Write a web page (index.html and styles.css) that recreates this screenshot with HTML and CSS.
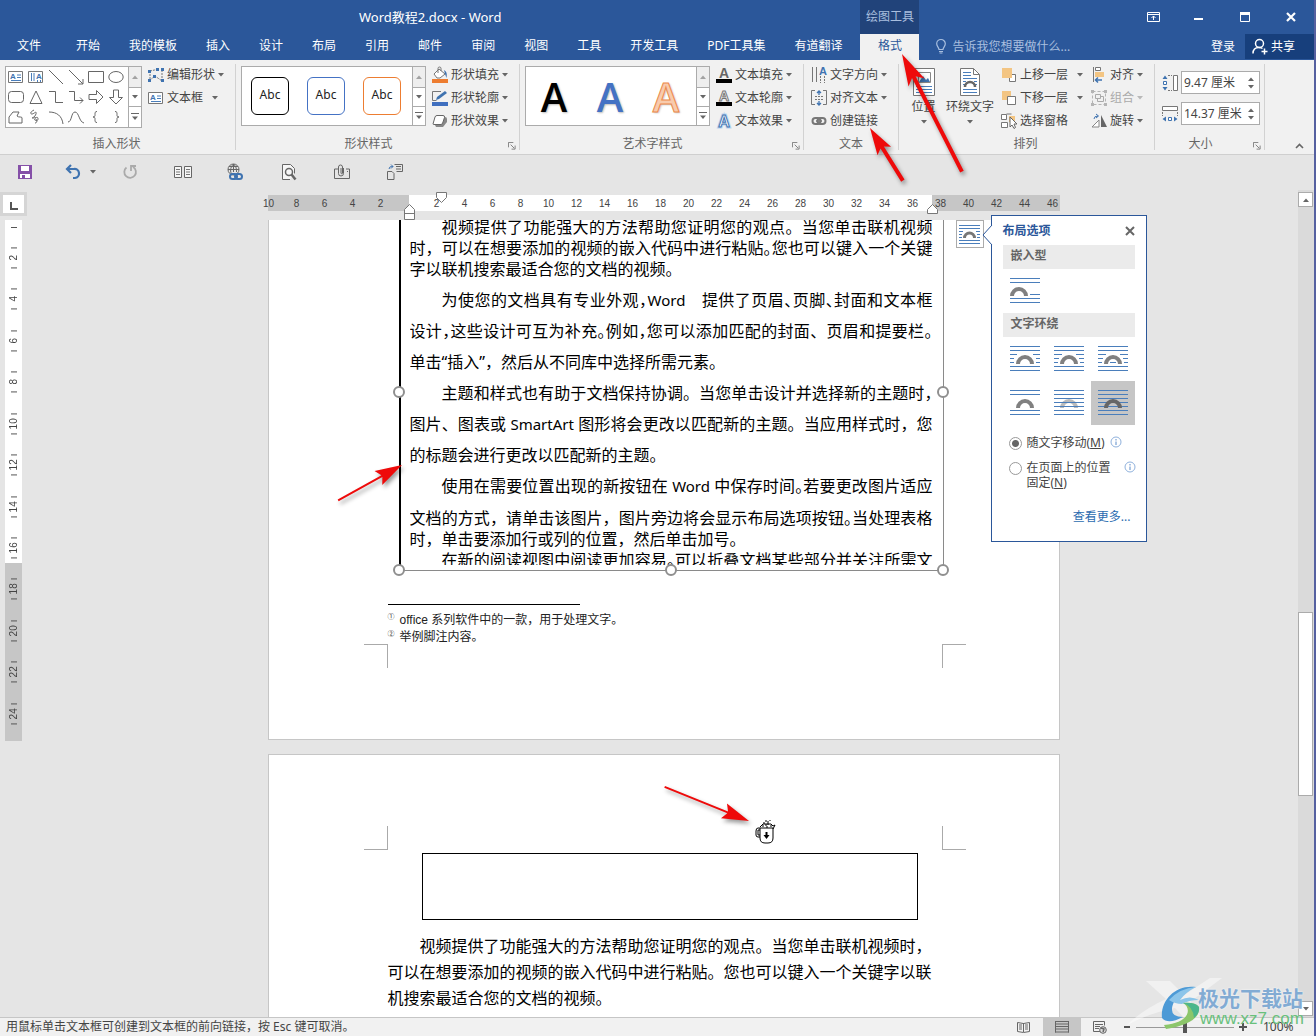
FILE: index.html
```html
<!DOCTYPE html>
<html lang="zh-CN">
<head>
<meta charset="utf-8">
<title>Word教程2.docx - Word</title>
<link rel="stylesheet" href="styles.css">
</head>
<body>
<svg class="defs" aria-hidden="true">
  <symbol id="caret" viewBox="0 0 6 4"><path d="M0 0h6L3 3.5z" fill="#666"/></symbol>
  <symbol id="launcher" viewBox="0 0 9 9"><path d="M.5 6V.5H6M3 3l4 4M8 4v4H4" fill="none" stroke="#777"/></symbol>
  <symbol id="more" viewBox="0 0 8 8"><path d="M0 .5h8" stroke="#666"/><path d="M1 3.500h6L4 7z" fill="#666"/></symbol>
  <symbol id="arch" viewBox="0 0 18 11"><path d="M0 11a9 9 0 0 1 18 0h-4a5 5 0 0 0-10 0z"/></symbol>
</svg>

<header class="top">
  <div class="top-main">
    <div class="doc-title">Word教程2.docx - Word</div>
    <nav class="tabs">
      <button class="tab file">文件</button><button class="tab">开始</button><button class="tab">我的模板</button><button class="tab">插入</button><button class="tab">设计</button><button class="tab">布局</button><button class="tab">引用</button><button class="tab">邮件</button><button class="tab">审阅</button><button class="tab">视图</button><button class="tab">工具</button><button class="tab">开发工具</button><button class="tab">PDF工具集</button><button class="tab">有道翻译</button>
    </nav>
  </div>
  <div class="context">
    <div class="context-name">绘图工具</div>
    <button class="tab active">格式</button>
  </div>
  <div class="top-side">
    <div class="win-buttons">
      <button aria-label="功能区显示选项"><svg width="13" height="10"><path d="M.5.5h12v9H.5zM.5 2.500h12M6.500 8V4M4.500 6l2-2 2 2" fill="none" stroke="#fff"/></svg></button>
      <button aria-label="最小化"><svg width="10" height="10"><path d="M0 7h9" stroke="#fff" stroke-width="2"/></svg></button>
      <button aria-label="最大化"><svg width="10" height="10"><path d="M.5.5h9v9h-9z" fill="none" stroke="#fff"/><path d="M0 1.500h10" stroke="#fff" stroke-width="3"/></svg></button>
      <button aria-label="关闭"><svg width="10" height="10"><path d="M1 1l8 8M9 1L1 9" stroke="#fff" stroke-width="2.200"/></svg></button>
    </div>
    <div class="account">
      <svg width="10" height="15"><path d="M3 10.500C3 8.500.7 7.500.7 4.800a4.300 4.300 0 0 1 8.600 0C9.300 7.500 7 8.500 7 10.500zM3 12.500h4M3.500 14h3" fill="none" stroke="#a9bfdf" stroke-width="1.200"/></svg>
      <span class="tell">告诉我您想要做什么...</span>
      <button class="login">登录</button>
      <button class="share"><svg width="16" height="17"><circle cx="7.500" cy="5.500" r="4" fill="none" stroke="#fff" stroke-width="1.500"/><path d="M1 15.500c0-4 2.500-6 6-6 1.500 0 2.500.3 3.500 1M12.500 10.500v6M9.500 13.500h6" fill="none" stroke="#fff" stroke-width="1.500"/></svg>共享</button>
    </div>
  </div>
</header>

<section class="ribbon">
  <div class="group g-insert">
    <div class="body">
      <div class="gallery shapes">
        <div class="cells">
          <button><svg class="i16" viewBox="0 0 16 16"><path d="M.5 2.500h14v11H.5z" fill="#fff" stroke="#777"/><text x="2" y="10" class="a8">A</text><path d="M9 6h4M9 8.500h4M3 11.500h10" stroke="#4a7ebb"/></svg></button>
          <button><svg class="i16" viewBox="0 0 16 16"><path d="M.5 2.500h14v11H.5z" fill="#fff" stroke="#777"/><text x="8" y="10" class="a8">A</text><path d="M3.500 4v8M6 4v8M9.500 11v2M12.500 11v2" stroke="#4a7ebb"/></svg></button>
          <button><svg class="i16 ln" viewBox="0 0 16 16"><path d="M1 1l14 14"/></svg></button>
          <button><svg class="i16 ln" viewBox="0 0 16 16"><path d="M1 1l14 14M15 10v5h-5"/></svg></button>
          <button><svg class="i16 ln" viewBox="0 0 16 16"><path d="M.5 2.500h15v11H.5z"/></svg></button>
          <button><svg class="i16 ln" viewBox="0 0 16 16"><ellipse cx="8" cy="8" rx="7.200" ry="5.500"/></svg></button>
          <button><svg class="i16 ln" viewBox="0 0 16 16"><rect x=".5" y="2.500" width="15" height="11" rx="3"/></svg></button>
          <button><svg class="i16 ln" viewBox="0 0 16 16"><path d="M8 2l6 12.500H2z"/></svg></button>
          <button><svg class="i16 ln" viewBox="0 0 16 16"><path d="M1 2.500h6.500v11H15"/></svg></button>
          <button><svg class="i16 ln" viewBox="0 0 16 16"><path d="M1 2.500h5.500v9H15M12 8.500l3 3-3 3"/></svg></button>
          <button><svg class="i16 ln" viewBox="0 0 16 16"><path d="M1 5.500h7.500v-4l6.500 6.500-6.500 6.500v-4H1z"/></svg></button>
          <button><svg class="i16 ln" viewBox="0 0 16 16"><path d="M5.500 1v7.500h-4L8 15l6.500-6.500h-4V1z"/></svg></button>
          <button><svg class="i16 ln" viewBox="0 0 16 16"><path d="M1 14V8l4-5h6l-2 4c2 2 5 0 5 2v5z"/></svg></button>
          <button><svg class="i16 ln" viewBox="0 0 16 16"><path d="M6 1C2 3 2 5 4 5s5-4 4 0-6 4-3 4 5-2 5 1-5 1-3 0 3 4 0 4"/></svg></button>
          <button><svg class="i16 ln" viewBox="0 0 16 16"><path d="M1 3c8 0 13 4 14 12"/></svg></button>
          <button><svg class="i16 ln" viewBox="0 0 16 16"><path d="M0 13C4 13 3 3 7 3s4 10 9 11"/></svg></button>
          <button><svg class="i16 ln" viewBox="0 0 16 16"><path d="M9 2.500c-2 0-2 1-2 3s0 2-2 2.500c2 .5 2 .5 2 2.500s0 3 2 3"/></svg></button>
          <button><svg class="i16 ln" viewBox="0 0 16 16"><path d="M7 2.500c2 0 2 1 2 3s0 2 2 2.500c-2 .5-2 .5-2 2.500s0 3-2 3"/></svg></button>
        </div>
        <div class="scroller"><button class="off" aria-label="上"><svg class="caret up"><use href="#caret"/></svg></button><button aria-label="下"><svg class="caret"><use href="#caret"/></svg></button><button aria-label="更多"><svg width="8" height="8"><use href="#more"/></svg></button></div>
      </div>
      <div class="stack">
        <button class="cmd"><svg class="i16" viewBox="0 0 16 16"><path d="M2 4l9-2M2 4v9l5-4 7 5V4" fill="none" stroke="#777" stroke-dasharray="2 1"/><path d="M0 3h3v3H0zM0 12h3v3H0zM13 1h3v3h-3zM13 12h3v3h-3zM5 8h3v3H5zM8 1h3v3H8z" fill="#3f73b0"/></svg>编辑形状<svg class="caret"><use href="#caret"/></svg></button>
        <button class="cmd"><svg class="i16" viewBox="0 0 16 16"><path d="M.5 2.500h14v11H.5z" fill="#fff" stroke="#777"/><text x="2" y="10" class="a8">A</text><path d="M9 6h4M9 8.500h4M3 11.500h10" stroke="#4a7ebb"/></svg>文本框<svg class="caret far"><use href="#caret"/></svg></button>
      </div>
    </div>
    <div class="label">插入形状</div>
  </div>

  <div class="group g-style">
    <div class="body">
      <div class="gallery">
        <div class="swatches"><button class="abc black">Abc</button><button class="abc blue">Abc</button><button class="abc orange">Abc</button></div>
        <div class="scroller"><button class="off" aria-label="上"><svg class="caret up"><use href="#caret"/></svg></button><button aria-label="下"><svg class="caret"><use href="#caret"/></svg></button><button aria-label="更多"><svg width="8" height="8"><use href="#more"/></svg></button></div>
      </div>
      <div class="stack">
        <button class="cmd"><svg class="i16" viewBox="0 0 16 16"><path d="M2 7l5-5 6 5-5 4H5z" fill="#fff" stroke="#777"/><path d="M6 6V1.500a1.500 1.500 0 0 1 3 0V4" fill="none" stroke="#777"/><path d="M12 3c3 2 3 4 2.500 8L13 7z" fill="#3f73b0"/><path d="M0 12h16v4H0z" fill="#ed7d31"/></svg>形状填充<svg class="caret"><use href="#caret"/></svg></button>
        <button class="cmd"><svg class="i16" viewBox="0 0 16 16"><path d="M9 1.500H.5v9h4" fill="none" stroke="#777"/><path d="M4 10l1-3 8-6 2 2-8 6z" fill="#3f73b0"/><path d="M0 12h16v4H0z" fill="#3f6fbf"/></svg>形状轮廓<svg class="caret"><use href="#caret"/></svg></button>
        <button class="cmd"><svg class="i16" viewBox="0 0 16 16"><path d="M3 12l3-8h7q2 0 2 2v3l-4 5H4z" fill="#888"/><path d="M1 11l2-7q.5-1.500 2-1.500h6q2 0 1.500 2L11 9q-.5 2.500-2 2.500H2q-1 0-1-.5z" fill="#fff" stroke="#666"/></svg>形状效果<svg class="caret"><use href="#caret"/></svg></button>
      </div>
    </div>
    <div class="label">形状样式<svg class="launch"><use href="#launcher"/></svg></div>
  </div>

  <div class="group g-style">
    <div class="body">
      <div class="gallery">
        <div class="swatches"><button class="art black">A</button><button class="art blue">A</button><button class="art orange">A</button></div>
        <div class="scroller"><button class="off" aria-label="上"><svg class="caret up"><use href="#caret"/></svg></button><button aria-label="下"><svg class="caret"><use href="#caret"/></svg></button><button aria-label="更多"><svg width="8" height="8"><use href="#more"/></svg></button></div>
      </div>
      <div class="stack">
        <button class="cmd"><svg class="i16" viewBox="0 0 16 16"><text x="8" y="11" class="a14" fill="#666">A</text><path d="M0 12h16v4H0z"/></svg>文本填充<svg class="caret"><use href="#caret"/></svg></button>
        <button class="cmd"><svg class="i16" viewBox="0 0 16 16"><text x="8" y="11" class="a14" fill="#fff" stroke="#777">A</text><path d="M0 12h16v4H0z"/></svg>文本轮廓<svg class="caret"><use href="#caret"/></svg></button>
        <button class="cmd"><svg class="i16" viewBox="0 0 16 16"><text x="8" y="14" class="a16" fill="#fff" stroke="#bcd5f0" stroke-width="3">A</text><text x="8" y="14" class="a16" fill="#fff" stroke="#3f73b0">A</text></svg>文本效果<svg class="caret"><use href="#caret"/></svg></button>
      </div>
    </div>
    <div class="label">艺术字样式<svg class="launch"><use href="#launcher"/></svg></div>
  </div>

  <div class="group g-text">
    <div class="body">
      <div class="stack">
        <button class="cmd"><svg class="i16" viewBox="0 0 16 16"><path d="M1.500 0v15M5.500 0v15" stroke="#777"/><path d="M9.500 9v7M13.500 9v7" stroke="#777" stroke-dasharray="2 1"/><text x="12" y="8" class="a10" fill="#3f73b0">A</text></svg>文字方向<svg class="caret"><use href="#caret"/></svg></button>
        <button class="cmd"><svg class="i16" viewBox="0 0 16 16"><path d="M4 .5H.5v14H4M12 .5h3.500v14H12" fill="none" stroke="#777"/><path d="M4 6.500h8M4 9.500h8" stroke="#777" stroke-dasharray="2 1"/><path d="M8 5V1M6 3l2-2 2 2M8 11v4M6 13l2 2 2-2" fill="none" stroke="#3f73b0" stroke-width="1.300"/></svg>对齐文本<svg class="caret"><use href="#caret"/></svg></button>
        <button class="cmd"><svg class="i16" viewBox="0 0 16 16"><rect x="1.500" y="5" width="8" height="6" rx="3" fill="none" stroke="#777" stroke-width="2"/><rect x="6.500" y="5" width="8" height="6" rx="3" fill="none" stroke="#777" stroke-width="2"/><path d="M5 8h6" stroke="#777" stroke-width="1.500"/></svg>创建链接</button>
      </div>
    </div>
    <div class="label">文本</div>
  </div>

  <div class="group g-arrange">
    <div class="body">
      <button class="big"><svg width="24" height="30" viewBox="0 0 24 30"><path d="M1.500 1.500h21v27h-21z" fill="#fff" stroke="#777"/><path d="M6.500 5.500h12v10h-12z" fill="#fff" stroke="#888"/><path d="M7 15l4-6 3 4 2-2 2 4z" fill="#3f73b0"/><path d="M4 19.500h16M4 22.500h16M4 25.500h16" stroke="#4a7ebb"/></svg><span>位置</span><svg class="caret"><use href="#caret"/></svg></button>
      <button class="big wide"><svg width="24" height="30" viewBox="0 0 24 30"><path d="M2.500 1.500h13l6 6v21h-19z" fill="#fff" stroke="#777"/><path d="M15.500 1.500v6h6" fill="none" stroke="#777"/><path d="M5 5.500h8M5 8.500h8M5 11.500h14M5 14.500h3M16 14.500h3M5 17.500h2M17 17.500h2M5 22.500h14M5 25.500h14" stroke="#4a7ebb"/><path d="M7 20a5 5 0 0 1 10 0" fill="none" stroke="#666" stroke-width="2.500"/></svg><span>环绕文字</span><svg class="caret"><use href="#caret"/></svg></button>
      <div class="stack order">
        <button class="cmd"><svg class="i16" viewBox="0 0 16 16"><path d="M8.500 7.500h6v7h-6z" fill="#fff" stroke="#777"/><path d="M1 1h10v10H1z" fill="#f3c583"/></svg>上移一层<svg class="caret far"><use href="#caret"/></svg></button>
        <button class="cmd"><svg class="i16" viewBox="0 0 16 16"><path d="M1 1h9v9H1z" fill="#f3c583"/><path d="M6.500 6.500h8v8h-8z" fill="#fff" stroke="#777"/></svg>下移一层<svg class="caret far"><use href="#caret"/></svg></button>
        <button class="cmd"><svg class="i16" viewBox="0 0 16 16"><path d="M.5 1.500h5v5h-5zM.5 9.500h6v5h-6zM5.500 1h5" fill="#fff" stroke="#777"/><path d="M8 3h6v6H8z" fill="#f3c583"/><path d="M9 4v10l2-2 2 3.500 1.500-1L13 11h3z" fill="#fff" stroke="#666"/></svg>选择窗格</button>
      </div>
      <div class="stack">
        <button class="cmd"><svg class="i16" viewBox="0 0 16 16"><path d="M2.500 0v15" stroke="#777"/><path d="M4.500.5h5v3h-5z" fill="#fff" stroke="#777"/><path d="M4 5h9v5H4z" fill="#f3c583"/><path d="M4 13h7M7 10.500L4.500 13 7 15.500" fill="none" stroke="#3f73b0" stroke-width="1.500"/></svg>对齐<svg class="caret"><use href="#caret"/></svg></button>
        <button class="cmd" disabled><svg class="i16" viewBox="0 0 16 16"><path d="M1.500 1.500h13v13h-13z" fill="none" stroke="#b5b5b5" stroke-dasharray="3 2"/><path d="M4.500 4.500h5v4h-5zM6.500 8.500v3h6v-5h-3" fill="none" stroke="#aaa"/><path d="M0 0h3v3H0zM13 0h3v3h-3zM0 13h3v3H0zM13 13h3v3h-3z" fill="#b5b5b5"/></svg>组合<svg class="caret"><use href="#caret"/></svg></button>
        <button class="cmd"><svg class="i16" viewBox="0 0 16 16"><path d="M8 14H1l7-7z" fill="#fff" stroke="#888"/><path d="M10 2v12h6z" fill="#666"/><path d="M3 6q0-3 4-3M5 1l2.500 2L5 5" fill="none" stroke="#3f73b0"/></svg>旋转<svg class="caret"><use href="#caret"/></svg></button>
      </div>
    </div>
    <div class="label">排列</div>
  </div>

  <div class="group g-size">
    <div class="body sizes">
      <label class="size"><svg class="i16" viewBox="0 0 16 16"><path d="M6 .5h4M6 15.500h4" stroke="#777" stroke-dasharray="2 1"/><path d="M11.500.5h4v15h-4z" fill="#fff" stroke="#777"/><path d="M3 .5L5.500 4h-5zM3 15.500L5.500 12h-5z" fill="#3f73b0"/><path d="M1.500 6.500h3v3h-3z" fill="#fff" stroke="#3f73b0"/></svg><span class="spin"><input aria-label="高度" value="9.47 厘米"><svg class="caret up"><use href="#caret"/></svg><svg class="caret"><use href="#caret"/></svg></span></label>
      <label class="size"><svg class="i16" viewBox="0 0 16 16"><path d="M.5 6v4M15.500 6v4" stroke="#777" stroke-dasharray="2 1"/><path d="M.5.5h15v4H.5z" fill="#fff" stroke="#777"/><path d="M.5 13L4 10.500v5zM15.500 13L12 10.500v5z" fill="#3f73b0"/><path d="M6.500 11.500h3v3h-3z" fill="#fff" stroke="#3f73b0"/></svg><span class="spin"><input aria-label="宽度" value="14.37 厘米"><svg class="caret up"><use href="#caret"/></svg><svg class="caret"><use href="#caret"/></svg></span></label>
    </div>
    <div class="label">大小<svg class="launch"><use href="#launcher"/></svg></div>
  </div>
  <button class="collapse" aria-label="折叠功能区"><svg width="9" height="6"><path d="M1 5l3.500-3.500L8 5" fill="none" stroke="#666" stroke-width="1.600"/></svg></button>
</section>

<div class="quick">
  <button aria-label="保存"><svg class="i16" viewBox="0 0 16 16"><path d="M1 1h14v14H1z" fill="#8550a8"/><path d="M4 2h8v5H4zM3 10h10v4H3z" fill="#fff"/><path d="M5 11h3v3H5z" fill="#8550a8"/></svg></button>
  <button class="undo" aria-label="撤消"><svg class="i16" viewBox="0 0 16 16"><path d="M6 1L2 5l4 4M2 5h7a4.500 4.500 0 0 1 1 9H8" fill="none" stroke="#3f73b0" stroke-width="2.200"/></svg><svg class="caret"><use href="#caret"/></svg></button>
  <button aria-label="重复"><svg class="i16" viewBox="0 0 16 16"><path d="M4.500 3.500A5.800 5.800 0 1 0 11 3M9 7V2h5" fill="none" stroke="#aaa" stroke-width="1.800"/></svg></button>
  <button aria-label="并排"><svg width="18" height="12"><path d="M.5.500h7v11h-7zM10.500.500h7v11h-7z" fill="#f6f6f6" stroke="#666"/><path d="M2 3.500h4M2 6h4M2 8.500h4M12 3.500h4M12 6h4M12 8.500h4" stroke="#777"/></svg></button>
  <button aria-label="超链接"><svg width="17" height="18"><circle cx="6.500" cy="6.500" r="5.500" fill="none" stroke="#666"/><path d="M1 6.500h11M6.500 1v8M2 3.500h9M6.500 1c-4 4-3 8-2 10M6.500 1c3 3 3 5 3 8" fill="none" stroke="#666"/><rect x="3" y="11" width="7" height="5" rx="2.500" fill="none" stroke="#3f73b0" stroke-width="2"/><rect x="8" y="11" width="7" height="5" rx="2.500" fill="none" stroke="#3f73b0" stroke-width="2"/></svg></button>
  <button aria-label="打印预览"><svg class="i16" viewBox="0 0 16 16"><path d="M9 15.500H1.500V.5h8l4 4v5" fill="#f6f6f6" stroke="#666"/><circle cx="8" cy="8" r="3.500" fill="none" stroke="#666" stroke-width="1.500"/><path d="M10.500 10.500l4 5" stroke="#666" stroke-width="2.500"/></svg></button>
  <button aria-label="附件"><svg width="16" height="16"><path d="M4 5H.5v9.500h15V5H12M13 7.500h1" fill="none" stroke="#666"/><path d="M9.500 4v5.500a2.500 2.500 0 0 1-5 0V3a2 2 0 0 1 4 0v6a.7.700 0 0 1-1.500 0V4" fill="none" stroke="#666"/></svg></button>
  <button aria-label="转换"><svg class="i16" viewBox="0 0 16 16"><path d="M.5 7.500H5l2 2v6H.5zM7.500.5h8v7h-6M9 2.500h5M9 5h5" fill="none" stroke="#666"/><path d="M2 5q0-3 4-2.500M4 .5l2 2-2 2" fill="none" stroke="#3f73b0"/></svg></button>
</div>

<main class="work">
  <aside class="rail">
    <div class="tabstop"><svg width="8" height="8"><path d="M1 0v7h7" fill="none" stroke="#555" stroke-width="2"/></svg></div>
    <div class="vruler"><span>2</span><span>4</span><span>6</span><span>8</span><span>10</span><span>12</span><span>14</span><span>16</span><span>18</span><span>20</span><span>22</span><span>24</span></div>
  </aside>

  <div class="canvas">
    <div class="hruler">
      <div class="marks"><span>10</span><span>8</span><span>6</span><span>4</span><span>2</span><span></span><span>2</span><span>4</span><span>6</span><span>8</span><span>10</span><span>12</span><span>14</span><span>16</span><span>18</span><span>20</span><span>22</span><span>24</span><span>26</span><span>28</span><span>30</span><span>32</span><span>34</span><span>36</span><span>38</span><span>40</span><span>42</span><span>44</span><span>46</span></div>
      <svg class="indent left" width="11" height="16"><path d="M.5 15.500v-10l5-5 5 5v10zM.5 9.500h10" fill="#fff" stroke="#777"/></svg>
      <svg class="indent first" width="11" height="11"><path d="M.5.500h10v5l-5 5-5-5z" fill="#fff" stroke="#777"/></svg>
      <svg class="indent right" width="11" height="10"><path d="M.5 9.500v-4l5-5 5 5v4z" fill="#fff" stroke="#777"/></svg>
    </div>

    <article class="page first-page">
      <div class="frame">
        <div class="frame-text">
          <p class="tight"><span class="in">视频提供了功能强大的方法帮助您证明您的观点。当您单击联机视频</span><span>时，可以在想要添加的视频的嵌入代码中进行粘贴<i>。</i>您也可以键入一个关键</span><span class="end">字以联机搜索最适合您的文档的视频。</span></p>
          <p class="loose"><span class="in">为使您的文档具有专业外观<i>，</i><b>Word</b>&emsp;提供了页眉<i>、</i>页脚<i>、</i>封面和文本框</span><span>设计<i>，</i>这些设计可互为补充<i>。</i>例如<i>，</i>您可以添加匹配的封面、页眉和提要栏<i>。</i></span><span class="end">单击“插入”，然后从不同库中选择所需元素。</span></p>
          <p class="loose"><span class="in">主题和样式也有助于文档保持协调。当您单击设计并选择新的主题时<i>，</i></span><span>图片、图表或 <b>SmartArt</b> 图形将会更改以匹配新的主题。当应用样式时，您</span><span class="end">的标题会进行更改以匹配新的主题。</span></p>
          <p class="loose"><span class="in">使用在需要位置出现的新按钮在 <b>Word</b> 中保存时间<i>。</i>若要更改图片适应</span></p>
          <p class="tight"><span>文档的方式，请单击该图片，图片旁边将会显示布局选项按钮<i>。</i>当处理表格</span><span class="end">时，单击要添加行或列的位置，然后单击加号。</span></p>
          <p class="tight next"><span class="in">在新的阅读视图中阅读更加容易<i>。</i>可以折叠文档某些部分并关注所需文</span></p>
        </div>
        <i class="grip w"></i><i class="grip e"></i><i class="grip sw"></i><i class="grip s"></i><i class="grip se"></i>
      </div>
      <div class="notes">
        <div><sup>①</sup>office 系列软件中的一款，用于处理文字。</div>
        <div><sup>②</sup>举例脚注内容。</div>
      </div>
      <div class="crops bottom"><i></i><i></i></div>

      <button class="layout-button" aria-label="布局选项"><svg width="21" height="20"><path d="M0 1.500h21M0 4.500h21M0 7.500h4M17 7.500h4M0 10.500h3M18 10.500h3M0 13.500h3M18 13.500h3M0 16.500h21M0 19.500h21" stroke="#4a7ebb"/><path d="M5.500 14a5 5 0 0 1 10 0" fill="none" stroke="#777" stroke-width="3"/></svg></button>
      <section class="popup">
        <svg class="pointer" width="10" height="20"><path d="M10 0L1 10l9 10" fill="#fff" stroke="#2b579a"/></svg>
        <div class="popup-head"><h2>布局选项</h2><button aria-label="关闭"><svg width="10" height="10"><path d="M1 1l8 8M9 1L1 9" stroke="#666" stroke-width="2"/></svg></button></div>
        <h3>嵌入型</h3>
        <div class="wraps"><button aria-label="嵌入型"><svg width="30" height="26"><path d="M0 .5h30M0 4.500h30M20 16.500h10M0 20.500h30M0 24.500h30" class="w"/><use href="#arch" y="7" width="18" height="11" fill="#808080"/></svg></button></div>
        <h3>文字环绕</h3>
        <div class="wraps">
          <button aria-label="四周型"><svg width="30" height="26"><path d="M0 .5h30M0 4.500h30M0 8.500h7M23 8.500h7M0 12.500h4M26 12.500h4M0 16.500h4M26 16.500h4M0 20.500h30M0 24.500h30" class="w"/><use href="#arch" x="6" y="7" width="18" height="11" fill="#808080"/></svg></button>
          <button aria-label="紧密型环绕"><svg width="30" height="26"><path d="M0 .5h30M0 4.500h30M0 8.500h8M22 8.500h8M0 12.500h5M25 12.500h5M0 16.500h4M26 16.500h4M0 20.500h30M0 24.500h30" class="w"/><use href="#arch" x="6" y="7" width="18" height="11" fill="#808080"/></svg></button>
          <button aria-label="穿越型环绕"><svg width="30" height="26"><path d="M0 .5h30M0 4.500h30M0 8.500h8M22 8.500h8M0 12.500h5M25 12.500h5M0 16.500h4M12 16.500h6M26 16.500h4M0 20.500h30M0 24.500h30" class="w"/><use href="#arch" x="6" y="7" width="18" height="11" fill="#808080"/></svg></button>
          <button aria-label="上下型环绕"><svg width="30" height="26"><path d="M0 .5h30M0 4.500h30M0 20.500h30M0 24.500h30" class="w"/><use href="#arch" x="6" y="7" width="18" height="11" fill="#808080"/></svg></button>
          <button aria-label="衬于文字下方"><svg width="30" height="26"><use href="#arch" x="6" y="7" width="18" height="11" fill="#bbb"/><path d="M0 .5h30M0 4.500h30M0 8.500h30M0 12.500h30M0 16.500h30M0 20.500h30M0 24.500h30" class="w"/></svg></button>
          <button class="on" aria-label="浮于文字上方"><svg width="30" height="26"><path d="M0 .5h30M0 4.500h30M0 8.500h30M0 12.500h30M0 16.500h30M0 20.500h30M0 24.500h30" class="w"/><use href="#arch" x="6" y="7" width="18" height="11" fill="#666"/></svg></button>
        </div>
        <div class="choice"><input type="radio" name="anchor" id="move" checked><label for="move">随文字移动(<u>M</u>)</label><svg class="info"><circle cx="6" cy="6" r="5" fill="none" stroke="#8fb1dc"/><path d="M6 3v1.500M6 5.500V9" stroke="#5b8bc9"/></svg></div>
        <div class="choice"><input type="radio" name="anchor" id="fix"><label for="fix">在页面上的位置<br>固定(<u>N</u>)</label><svg class="info"><circle cx="6" cy="6" r="5" fill="none" stroke="#8fb1dc"/><path d="M6 3v1.500M6 5.500V9" stroke="#5b8bc9"/></svg></div>
        <a class="see-more" href="#">查看更多...</a>
      </section>
    </article>

    <article class="page next-page">
      <div class="crops head"><i></i><i></i></div>
      <div class="empty-box"></div>
      <p class="para">视频提供了功能强大的方法帮助您证明您的观点。当您单击联机视频时，可以在想要添加的视频的嵌入代码中进行粘贴。您也可以键入一个关键字以联机搜索最适合您的文档的视频。</p>
      <svg class="mug" width="22" height="24"><path d="M5 8h13v10q0 5-5 5h-3q-5 0-5-5z" fill="#fff" stroke="#000"/><path d="M5 8H3q-2 0-2 3v4q0 2 2 2h2M5 10H3v5h2" fill="none" stroke="#000"/><path d="M5 7l3-3h8l2 2 2-1-2 4M7 6h2M11 7h2M10 5h2M15 6h2M8 3h2M13 1v2M10 1h2M15 0v1M12 4h2" fill="none" stroke="#000"/><path d="M11.500 12v4" stroke="#000" stroke-width="2"/><path d="M8.500 15h6l-3 4z"/></svg>
    </article>
  </div>

  <div class="scrollbar">
    <button aria-label="向上滚动"><svg class="caret up"><use href="#caret"/></svg></button>
    <div class="track"><div class="thumb"></div></div>
    <button aria-label="向下滚动"><svg class="caret"><use href="#caret"/></svg></button>
  </div>
</main>

<footer class="status">
  <span class="hint">用鼠标单击文本框可创建到文本框的前向链接，按 Esc 键可取消。</span>
  <button class="view" aria-label="阅读视图"><svg width="14" height="12"><path d="M.5 1.500l6 1 6-1v9l-6 1-6-1zM6.500 2v9M2 4h3M2 6h3M2 8h3M8 4h3M8 6h3M8 8h3" fill="none" stroke="#666"/></svg></button>
  <button class="view on" aria-label="页面视图"><svg width="14" height="12"><path d="M0 .5h14M0 3h14M0 5.500h14M0 8h14M0 11h14M.5 0v11.500M13.500 0v11.500" stroke="#666"/></svg></button>
  <button class="view" aria-label="Web 版式"><svg width="14" height="13"><path d="M7 10.500H.5v-10h11v4M2 3.500h8M2 5.500h5M2 7.500h4" fill="none" stroke="#666"/><circle cx="10" cy="9" r="3.300" fill="#ddd" stroke="#666"/><path d="M8 7l3 1-1 3" fill="none" stroke="#666" stroke-width="1.500"/></svg></button>
  <button class="zoom" aria-label="缩小"><svg width="7" height="10"><path d="M0 5h6" stroke="#555" stroke-width="2"/></svg></button>
  <input class="slider" type="range" aria-label="显示比例" min="0" max="100" value="50">
  <button class="zoom" aria-label="放大"><svg width="9" height="10"><path d="M0 5h8M4 1v8" stroke="#555" stroke-width="2"/></svg></button>
  <span class="percent">100%</span>
</footer>

<div class="brand">
  <svg width="182" height="60"><path d="M22 5h24l14 14L86 2h12L66 26q8 8 14 18H62L51 32Q22 38 2 50 18 34 42 23z" fill="#fff" opacity=".45"/><path d="M38 42C36 24 52 8 72 11 58 14 48 24 48 34q0 7 11 7-15 8-21 1z" fill="#4d9ad6"/><path d="M45 24Q56 12 72 11 62 16 56 24q10-5 19 0-10 0-17 4-7 0-13-4z" fill="#8cc5ea"/><path d="M40 49C66 47 68 32 59 27q12-1 16 4 2 16-33 22z" fill="#8cc66a"/><path d="M59 27q12-1 16 4 1 6-5 11-1-12-11-15z" fill="#4cb68c"/></svg>
  <div><strong>极光下载站</strong><em>www.xz7.com</em></div>
</div>

<svg class="arrows" aria-hidden="true">
  <g transform="translate(902 54) rotate(-117)"><path d="M0 0L-32-9L-26-2H-132V2H-26L-32 9z"/></g>
  <g transform="translate(870 128) rotate(-122)"><path d="M0 0L-27-8L-23-2H-62V2H-23L-27 8z"/></g>
  <g transform="translate(402 465) rotate(-29)"><path d="M0 0L-27-8L-23-1H-73V1H-23L-27 8z"/></g>
  <g transform="translate(749 821) rotate(22)"><path d="M0 0L-27-8L-23-1H-91V1H-23L-27 8z"/></g>
</svg>
</body>
</html>
```

FILE: styles.css
```css
* { box-sizing: border-box; }

body {
  margin: 0;
  min-height: 100vh;
  display: flex;
  flex-direction: column;
  position: relative;
  overflow-x: hidden;
  border-right: 2px solid #5560a0;
  background: #e5e5e5;
  color: #444;
  font: 12px/16px "Noto Sans", "Noto Sans CJK SC", sans-serif;
}

button, input { font: inherit; color: inherit; }
button { border: 0; padding: 0; background: none; display: flex; align-items: center; justify-content: center; white-space: nowrap; }
svg { display: block; flex: none; overflow: visible; }
p, h2, h3 { margin: 0; font-size: 12px; }

.defs { position: absolute; width: 0; height: 0; }
.i16 { width: 16px; height: 16px; }
.caret { width: 6px; height: 4px; }
.caret.up { transform: rotate(180deg); }
.ln { fill: none; stroke: #666; }
.a8 { font: bold 8px "Liberation Sans", sans-serif; fill: #3f73b0; }
.a10, .a14, .a16 { font: bold 11px "Liberation Sans", sans-serif; text-anchor: middle; }
.a14 { font-size: 14px; }
.a16 { font-size: 16px; }

/* Title bar and tabs */
.top { display: flex; background: #2b579a; color: #fff; height: 60px; }
.top-main { flex: none; padding-right: 4px; }
.doc-title { height: 34px; line-height: 34px; text-align: center; font-size: 13px; padding-left: 4px; }
.tabs { display: flex; gap: 1px; }
.tab { height: 26px; padding: 0 14px 3px; }
.tab.file { padding: 0 20px 3px 17px; }
.context { width: 59px; flex: none; }
.context-name { height: 34px; line-height: 34px; text-align: center; background: #21437a; color: #a9bfdf; }
.tab.active { width: 100%; background: #f1f1f1; color: #2b579a; }
.top-side { flex: 1; display: flex; flex-direction: column; }
.win-buttons { display: flex; justify-content: flex-end; height: 34px; }
.win-buttons button { width: 46px; }
.account { display: flex; align-items: center; height: 25px; padding-left: 17px; }
.tell { margin-left: 6px; flex: 1; color: #a9bfdf; }
.login { padding-right: 10px; }
.share { width: 69px; height: 25px; gap: 3px; background: #173f7c; padding-right: 12px; }

/* Ribbon */
.ribbon { display: flex; height: 95px; background: #f1f1f1; border-bottom: 1px solid #cfcfcf; position: relative; }
.group { flex: none; position: relative; padding: 3px 0 0 5px; }
.group::after { content: ""; position: absolute; right: 0; top: 4px; bottom: 4px; width: 1px; background: #d2d2d2; }
.g-insert { width: 236px; }
.g-style { width: 284px; }
.g-text { width: 95px; padding-left: 7px; }
.g-arrange { width: 256px; }
.g-size { width: 110px; padding-left: 7px; }
.body { display: flex; gap: 6px; height: 70px; }
.g-arrange .body { gap: 3px; }
.label { height: 21px; line-height: 21px; text-align: center; color: #666; padding-right: 8px; position: relative; }
.g-style .label { padding-right: 24px; }
.g-size .label { padding-right: 26px; }
.launch { position: absolute; right: 4px; top: 9px; width: 8px; height: 8px; }
.gallery { display: flex; height: 60px; margin-top: 3px; border: 1px solid #ababab; background: #fff; }
.gallery.shapes { height: 62px; }
.cells { display: grid; grid-template-columns: repeat(6, 20px); grid-auto-rows: 20px; margin-right: 2px; }
.scroller { width: 13px; display: grid; grid-template-rows: 20px 19px 1fr; border-left: 1px solid #ababab; }
.scroller button + button { border-top: 1px solid #ababab; }
.scroller .off { background: #e3e3e3; opacity: .6; }
.swatches { display: flex; width: 170px; align-items: center; }
.swatches button { flex: none; }
.abc { width: 38px; height: 38px; margin: 0 9px; border: 1px solid #000; border-radius: 6px; color: #222; padding-bottom: 3px; }
.abc.blue { border-color: #4472c4; }
.abc.orange { border-color: #ed7d31; }
.art { width: 56px; height: 58px; padding-top: 2px; font: 600 40px/56px "Open Sans", sans-serif; text-shadow: 1px 1px 2px #bbb; }
.art.black { color: #000; }
.art.blue { color: #4472c4; }
.art.orange { color: #f8cbad; -webkit-text-stroke: 1px #ed8a4c; }
.stack { display: flex; flex-direction: column; align-items: flex-start; }
.cmd { height: 23px; gap: 3px; }
.cmd .far { margin-left: 6px; }
.cmd:disabled { color: #aaa; }
.cmd:disabled .caret { opacity: .4; }
.order { width: 87px; margin-left: 4px; }
.big { flex-direction: column; justify-content: flex-start; width: 39px; padding-top: 4px; }
.big.wide { width: 48px; }
.big span { margin: 2px 0 5px; }
.sizes { flex-direction: column; gap: 8px; padding-top: 8px; }
.size { display: flex; align-items: center; gap: 3px; }
.spin { display: grid; grid-template-columns: 1fr 6px; align-items: center; justify-items: end; width: 79px; height: 23px; padding: 3px 5px 3px 2px; border: 1px solid #ababab; background: #fff; }
.spin input { grid-row: 1 / 3; width: 64px; border: 0; padding: 0; background: none; }
.collapse { position: absolute; right: 10px; bottom: 5px; }

/* Quick access toolbar */
.quick { display: grid; grid-template-columns: 50px repeat(7, 53px); align-items: center; height: 33px; margin-bottom: 2px; }
.undo { gap: 9px; padding-left: 8px; }

/* Workspace */
.work { flex: 1; display: flex; }
.rail { flex: none; width: 28px; padding-top: 2px; }
.tabstop { width: 27px; height: 24px; display: flex; align-items: center; justify-content: center; background: #fff; border: 3px solid #d5d5d5; padding-top: 4px; }
.vruler { display: flex; flex-direction: column; width: 17px; height: 521px; margin: 4px 0 0 5px; padding: 17px 0 7px; position: relative; background: linear-gradient(#fff 343px, #c6c6c6 343px); font: 10px/17px "Liberation Sans", sans-serif; }
.vruler span { flex: 1; writing-mode: vertical-rl; transform: rotate(180deg); text-align: center; position: relative; }
.vruler span::before, .vruler span::after, .vruler::before { content: ""; position: absolute; left: 5px; width: 6px; height: 1px; background: #555; }
.vruler span::before { top: 10px; }
.vruler span::after { bottom: 10px; }
.vruler::before { top: 7px; left: 6px; }

.canvas { flex: 1; display: flex; flex-direction: column; align-items: center; padding: 5px 0 0 1px; }
.hruler { width: 792px; height: 16px; position: relative; background: linear-gradient(90deg, #c6c6c6 141px, #fff 141px 664px, #c6c6c6 664px); }
.marks { display: flex; margin: 0 -13px; font: 10px/17px "Liberation Sans", sans-serif; color: #444; }
.marks span { flex: none; width: 28px; text-align: center; }
.indent { position: absolute; }
.indent.left { left: 136px; top: 9px; }
.indent.first { left: 168px; top: -3px; }
.indent.right { left: 659px; top: 9px; }

.page { width: 792px; background: #fff; border: 1px solid #c6c6c6; position: relative; color: #000; }
.first-page { margin-top: 9px; border-top: 0; padding-bottom: 71px; }
.next-page { margin-top: 14px; border-bottom: 0; flex: 1; padding-top: 71px; }
.frame { margin: 0 115px 0 130px; padding: 0 10px 5px 9px; border: solid #8a8a8a; border-width: 0 1px 1px 0; border-left: 2px solid #000; position: relative; }
.frame-text { height: 345px; overflow: hidden; }
.frame-text p { font-size: 16px; }
.frame-text span { display: block; white-space: nowrap; text-align: justify; text-align-last: justify; }
.frame-text .in { padding-left: 32px; }
.frame-text .end { text-align-last: left; }
.frame-text i { font-style: normal; font-feature-settings: "halt"; }
.frame-text b { font-weight: 400; font-size: 15px; }
.tight { line-height: 21px; margin-top: -3px; }
.loose { line-height: 31px; }
.tight + .loose { margin-top: 5px; }
.loose + .tight { margin-top: 6px; }
.tight.next { margin-top: 0; }
.grip { position: absolute; width: 12px; height: 12px; border: 2px solid #8f8f8f; border-radius: 50%; background: #fff; }
.grip.w, .grip.sw { left: -8px; }
.grip.e, .grip.se { right: -6px; }
.grip.w, .grip.e { top: 166px; }
.grip.s { left: 264px; }
.grip.s, .grip.sw, .grip.se { bottom: -6px; }
.notes { height: 73px; padding-top: 33px; margin: 0 119px; line-height: 17px; color: #222; font-family: "Liberation Sans", "Noto Sans CJK SC", sans-serif; }
.notes::before { content: ""; display: block; width: 192px; height: 1px; margin-bottom: 7px; background: #000; }
.notes div { display: flex; }
.notes sup { width: 12px; font-size: 7px; line-height: 9px; vertical-align: top; }
.crops { display: flex; justify-content: space-between; margin: 0 93px 0 95px; }
.crops i { width: 24px; height: 24px; border: 0 solid #aaa; border-right-width: 1px; }
.crops i + i { border-right-width: 0; border-left-width: 1px; }
.bottom i { border-top-width: 1px; }
.head i { border-bottom-width: 1px; }
.empty-box { height: 67px; margin: 3px 141px 0 153px; border: 1px solid #000; }
.para { margin: 13px 126px 0 119px; font-size: 16px; line-height: 26px; text-indent: 32px; }
.mug { position: absolute; left: 486px; top: 65px; }

/* Layout options */
.layout-button { position: absolute; left: 687px; top: 0; width: 28px; height: 28px; border: 1px solid #ababab; background: #fff; }
.popup { position: absolute; z-index: 2; left: 722px; top: -5px; width: 156px; height: 327px; padding: 0 11px; border: 1px solid #2b579a; background: #fff; color: #444; }
.pointer { position: absolute; left: -10px; top: 9px; }
.popup-head { display: flex; justify-content: space-between; align-items: center; height: 29px; }
.popup h2 { color: #2b579a; }
.popup h3 { height: 24px; line-height: 22px; padding-left: 8px; background: #ebebeb; color: #666; }
.wraps { display: grid; grid-template-columns: repeat(3, 44px); grid-auto-rows: 44px; }
.wraps .on { background: #c6c6c6; }
.w { stroke: #4a7ebb; }
.choice { display: flex; gap: 5px; margin: 10px 0 0 6px; line-height: 15px; white-space: nowrap; }
.choice input { appearance: none; flex: none; width: 13px; height: 13px; margin: 2px 0 0; border: 1px solid #999; border-radius: 50%; background: #fff; }
.choice input:checked { background: radial-gradient(#666 3px, #fff 4px); }
.info { width: 12px; height: 12px; margin: 1px 0 0; }
.choice + .choice .info { margin-left: 8px; }
.see-more { display: block; margin: 19px 4px 0; text-align: right; color: #2b6cb0; text-decoration: none; }

/* Scroll bar */
.scrollbar { flex: none; display: flex; flex-direction: column; width: 16px; padding: 2px 1px 1px 0; background: #dadada; }
.scrollbar button { height: 15px; border: 1px solid #ababab; background: #fff; }
.track { flex: 1; }
.track::before { content: ""; display: block; height: 51%; }
.thumb { height: 184px; border: 1px solid #ababab; background: #fff; }

/* Status bar */
.status { display: flex; align-items: center; height: 19px; padding: 0 20px 0 6px; background: #f1f1f1; border-top: 1px solid #c6c6c6; }
.hint { flex: 1; }
.view { width: 38px; height: 18px; }
.view.on { background: #c6c6c6; }
.zoom { width: 14px; }
.view + .zoom { margin-left: 1px; }
.slider { appearance: none; width: 98px; height: 12px; margin: 0 2px; background: linear-gradient(#999, #999) center / 100% 1px no-repeat; }
.slider::-webkit-slider-thumb { appearance: none; width: 4px; height: 11px; background: #555; }
.percent { margin-left: 13px; width: 31px; }

/* Site mark */
.brand { position: absolute; right: 4px; bottom: 0; width: 186px; height: 60px; pointer-events: none; }
.brand div { position: absolute; left: 74px; top: 8px; }
.brand strong { display: block; font: bold 21px/26px "Noto Sans CJK SC", sans-serif; color: #82abd3; white-space: nowrap; text-shadow: 0 0 2px #fff; }
.brand em { display: block; padding-left: 2px; font: 17px/18px "Liberation Sans", sans-serif; color: #69c07c; }

.arrows { position: absolute; inset: 0; z-index: 3; width: 100%; height: 100%; pointer-events: none; overflow: hidden; fill: #ee0a0a; filter: drop-shadow(2px 3px 2px #0006); }
```
